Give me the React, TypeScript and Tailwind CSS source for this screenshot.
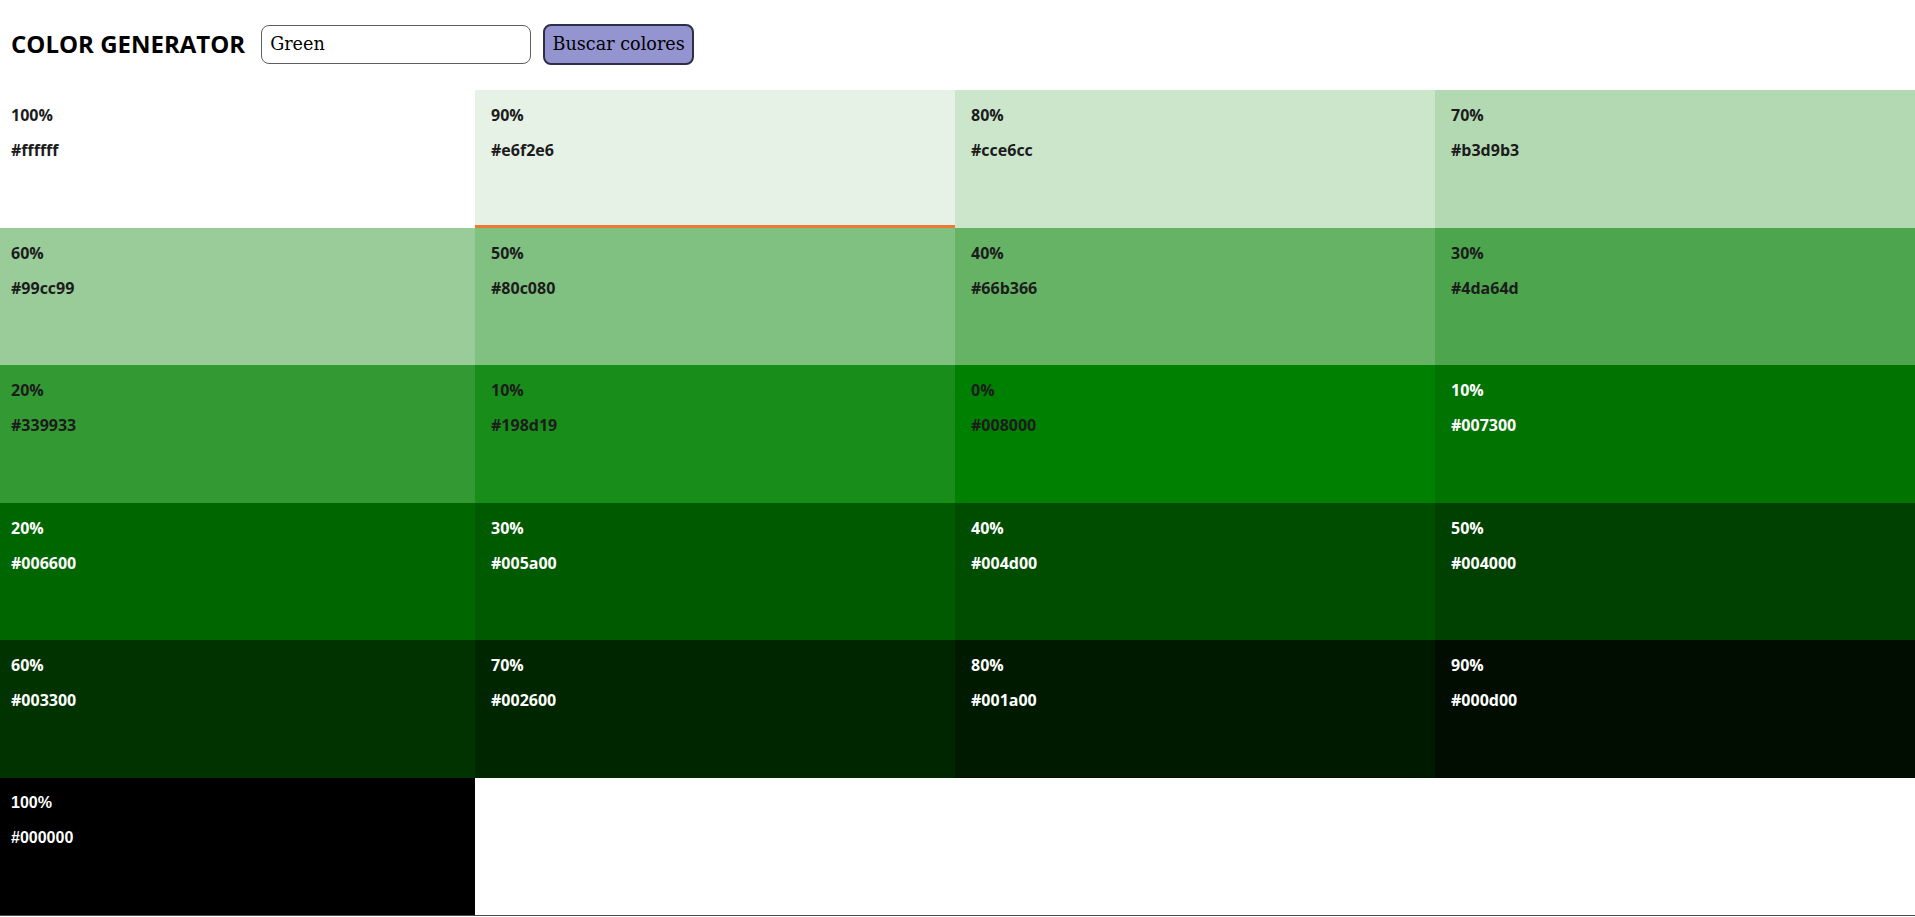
import React from "react";

type Shade = { pct: string; hex: string; light?: boolean };

const shades: Shade[] = [
  { pct: "100%", hex: "#ffffff" },
  { pct: "90%", hex: "#e6f2e6" },
  { pct: "80%", hex: "#cce6cc" },
  { pct: "70%", hex: "#b3d9b3" },
  { pct: "60%", hex: "#99cc99" },
  { pct: "50%", hex: "#80c080" },
  { pct: "40%", hex: "#66b366" },
  { pct: "30%", hex: "#4da64d" },
  { pct: "20%", hex: "#339933" },
  { pct: "10%", hex: "#198d19" },
  { pct: "0%", hex: "#008000" },
  { pct: "10%", hex: "#007300", light: true },
  { pct: "20%", hex: "#006600", light: true },
  { pct: "30%", hex: "#005a00", light: true },
  { pct: "40%", hex: "#004d00", light: true },
  { pct: "50%", hex: "#004000", light: true },
  { pct: "60%", hex: "#003300", light: true },
  { pct: "70%", hex: "#002600", light: true },
  { pct: "80%", hex: "#001a00", light: true },
  { pct: "90%", hex: "#000d00", light: true },
  { pct: "100%", hex: "#000000", light: true },
];

export default function App() {
  return (
    <div className="min-h-screen bg-white">
      {/* Header */}
      <header className="flex items-center h-[90px] pl-[11px] pb-[2px]">
        <h1 className="text-[24px] font-bold text-black [font-family:'Open_Sans',sans-serif]">
          COLOR GENERATOR
        </h1>
        <input
          defaultValue="Green"
          className="ml-[16px] w-[270px] h-[39px] px-[8px] rounded-lg border border-[#5f5f5f] text-[17.6px] text-black outline-none [font-family:'DejaVu_Serif',serif]"
        />
        <button className="ml-[12px] w-[151px] h-[41px] rounded-lg border-2 border-[#2e2e48] bg-[#9494d0] text-[17.6px] text-black [font-family:'DejaVu_Serif',serif]">
          Buscar colores
        </button>
      </header>

      {/* Shades grid */}
      <div className="grid grid-cols-[475px_1fr_1fr_1fr] auto-rows-[137.5px]">
        {shades.map((s, i) => (
          <div
            key={i}
            style={{ backgroundColor: s.hex }}
            className={`pt-[14px] font-bold ${i % 4 === 0 ? "pl-[11px]" : "pl-[16px]"} ${
              s.light ? "text-white" : "text-[#1c1c1c]"
            } ${i === 1 ? "border-b-[3px] border-[#ec7a35]" : ""} ${
              i === 20 ? "[font-family:'Liberation_Sans',sans-serif]" : "[font-family:'Open_Sans',sans-serif]"
            }`}
          >
            <p className="text-[16px] leading-[22px]">{s.pct}</p>
            <p className="mt-[13px] text-[16px] leading-[22px]">{s.hex}</p>
          </div>
        ))}
      </div>
      <div className="h-px bg-[#4a4a4a]" />
    </div>
  );
}
